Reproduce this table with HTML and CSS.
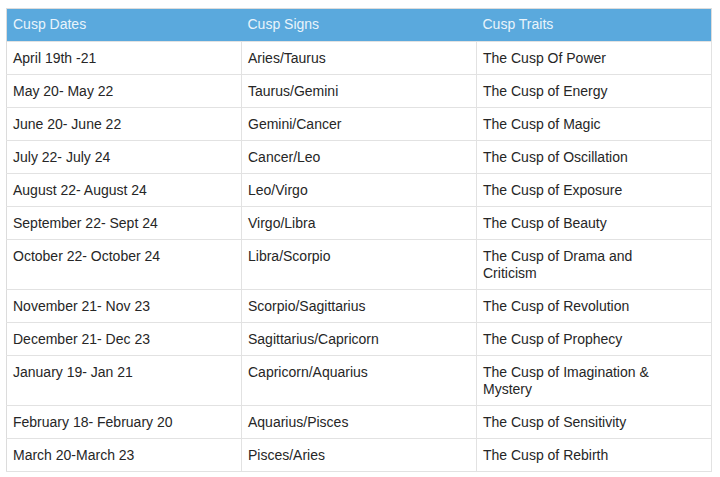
FILE: index.html
```html
<!DOCTYPE html>
<html>
<head>
<meta charset="utf-8">
<link rel="stylesheet" href="styles.css">
</head>
<body>
<table class="cusp-table">
  <thead>
    <tr><th>Cusp Dates</th><th>Cusp Signs</th><th>Cusp Traits</th></tr>
  </thead>
  <tbody>
    <tr><td>April 19th -21</td><td>Aries/Taurus</td><td>The Cusp Of Power</td></tr>
    <tr><td>May 20- May 22</td><td>Taurus/Gemini</td><td>The Cusp of Energy</td></tr>
    <tr><td>June 20- June 22</td><td>Gemini/Cancer</td><td>The Cusp of Magic</td></tr>
    <tr><td>July 22- July 24</td><td>Cancer/Leo</td><td>The Cusp of Oscillation</td></tr>
    <tr><td>August 22- August 24</td><td>Leo/Virgo</td><td>The Cusp of Exposure</td></tr>
    <tr><td>September 22- Sept 24</td><td>Virgo/Libra</td><td>The Cusp of Beauty</td></tr>
    <tr><td>October 22- October 24</td><td>Libra/Scorpio</td><td>The Cusp of Drama and<br>Criticism</td></tr>
    <tr><td>November 21- Nov 23</td><td>Scorpio/Sagittarius</td><td>The Cusp of Revolution</td></tr>
    <tr><td>December 21- Dec 23</td><td>Sagittarius/Capricorn</td><td>The Cusp of Prophecy</td></tr>
    <tr><td>January 19- Jan 21</td><td>Capricorn/Aquarius</td><td>The Cusp of Imagination &amp;<br>Mystery</td></tr>
    <tr><td>February 18- February 20</td><td>Aquarius/Pisces</td><td>The Cusp of Sensitivity</td></tr>
    <tr><td>March 20-March 23</td><td>Pisces/Aries</td><td>The Cusp of Rebirth</td></tr>
  </tbody>
</table>
</body>
</html>
```

FILE: styles.css
```css
html, body {
  background: #ffffff;
}
body {
  margin: 8px 8px 0 6px;
  font-family: "Liberation Sans", Arial, Helvetica, sans-serif;
  font-size: 14px;
  color: #262626;
}
.cusp-table {
  width: 706px;
  border-collapse: collapse;
  table-layout: fixed;
  border: 1px solid #dcdcdc;
}
.cusp-table th {
  background: #5aa9dd;
  color: #e9f4fb;
  font-weight: normal;
  text-align: left;
  line-height: 17px;
  padding: 7px 6px 8px 6px;
  height: 17px;
}
.cusp-table td {
  vertical-align: top;
  line-height: 17px;
  padding: 8px 6px 7px 6px;
  border: 1px solid #e2e2e2;
}
.cusp-table td:first-child {
  border-left-color: #dcdcdc;
}
```
